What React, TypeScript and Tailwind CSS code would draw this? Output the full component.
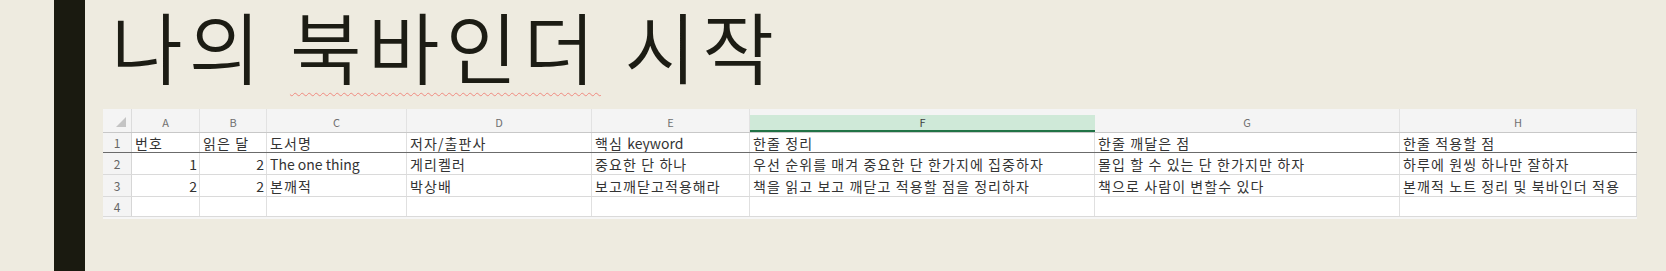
import React from "react";

const cols = [
    { key: "A", w: "w-[68px]" },
    { key: "B", w: "w-[67px]" },
    { key: "C", w: "w-[140px]" },
    { key: "D", w: "w-[185px]" },
    { key: "E", w: "w-[158px]" },
    { key: "F", w: "w-[345px]" },
    { key: "G", w: "w-[305px]" },
    { key: "H", w: "w-[237px]" },
];

// each row: [번호, 읽은 달, 도서명, 저자/출판사, 핵심 keyword, 한줄 정리, 한줄 깨달은 점, 한줄 적용할 점]
const rows: string[][] = [
    ["번호", "읽은 달", "도서명", "저자/출판사", "핵심 keyword", "한줄 정리", "한줄 깨달은 점", "한줄 적용할 점"],
    ["1", "2", "The one thing", "게리켈러", "중요한 단 하나", "우선 순위를 매겨 중요한 단 한가지에 집중하자", "몰입 할 수 있는 단 한가지만 하자", "하루에 원씽 하나만 잘하자"],
    ["2", "2", "본깨적", "박상배", "보고깨닫고적용해라", "책을 읽고 보고 깨닫고 적용할 점을 정리하자", "책으로 사람이 변할수 있다", "본깨적 노트 정리 및 북바인더 적용"],
    ["", "", "", "", "", "", "", ""],
];

const rowHeights = ["h-[20px]", "h-[22px]", "h-[22px]", "h-[20px]"];

const font = { fontFamily: '"Noto Sans CJK KR", "Noto Sans", sans-serif' };

// latin runs keep normal spacing, hangul gets a little extra
function CellText({ text }: { text: string }) {
    const parts = text.split(/([A-Za-z0-9/]+(?: [A-Za-z0-9/]+)*)/).filter((p) => p !== "");
    return (
        <span>
            {parts.map((p, i) =>
                /[A-Za-z0-9]/.test(p) ? (
                    <span key={i} className="tracking-normal">
                        {p}
                    </span>
                ) : (
                    <span key={i}>{p}</span>
                )
            )}
        </span>
    );
}

function Sheet() {
    return (
        <div className="bg-white w-[1534px]" style={font}>
            {/* column letters */}
            <div className="flex h-[24px] bg-[#f4f4f4] border-b border-[#c8c8c8]">
                <div className="w-[29px] border-r border-[#dcdcdc] relative">
                    <div className="absolute right-[5px] bottom-[5px] w-0 h-0 border-l-[10px] border-l-transparent border-b-[10px] border-b-[#c4c4c4]" />
                </div>
                {cols.map((c) =>
                    c.key === "F" ? (
                        <div
                            key={c.key}
                            className={`${c.w} mt-[6px] bg-[#cfe9d8] border-b-2 border-[#217346] text-[11px] text-[#3f3f3f] flex items-center justify-center leading-none`}
                        >
                            {c.key}
                        </div>
                    ) : (
                        <div
                            key={c.key}
                            className={`${c.w} border-r border-[#e2e2e2] text-[11px] text-[#707070] flex items-center justify-center pt-[4px] leading-none`}
                        >
                            {c.key}
                        </div>
                    )
                )}
            </div>
            {rows.map((r, i) => (
                <div
                    key={i}
                    className={`flex ${rowHeights[i]} ${i === 0 ? "border-b border-[#6b6b6b]" : "border-b border-[#dadada]"}`}
                >
                    <div className="w-[29px] bg-[#f4f4f4] border-r border-[#d6d6d6] text-[12px] text-[#666] flex items-center justify-center">
                        {i + 1}
                    </div>
                    {r.map((v, j) => {
                        const num = i > 0 && j < 2 && v !== "";
                        return (
                            <div
                                key={j}
                                className={`${cols[j].w} border-r border-[#e0e0e0] text-[14px] text-[#333] tracking-[1.1px] flex items-center whitespace-pre overflow-hidden leading-none ${num ? "justify-end pr-[2px] tracking-normal" : "pl-[3px]"}`}
                            >
                                <CellText text={v} />
                            </div>
                        );
                    })}
                </div>
            ))}
            <div className="h-[2px] bg-[#f6f6f6]" />
        </div>
    );
}

export default function App() {
    return (
        <div className="w-[1666px] h-[271px] bg-[#eeebe0] flex overflow-hidden">
            <div className="ml-[54px] w-[31px] h-full bg-[#1a1a10]" />
            <div className="pl-[18px] flex flex-col">
                <div className="h-[109px] pl-[8px] pt-[1px]">
                    <h1
                        className="text-[78px] leading-[1.15] font-[350] tracking-[6px] text-[#1c1c14] whitespace-nowrap"
                        style={font}
                    >
                        나의{" "}
                        <span className="underline decoration-wavy decoration-[#f08a80] decoration-1 underline-offset-[13px]">
                            북바인더
                        </span>{" "}
                        시작
                    </h1>
                </div>
                <Sheet />
            </div>
        </div>
    );
}
